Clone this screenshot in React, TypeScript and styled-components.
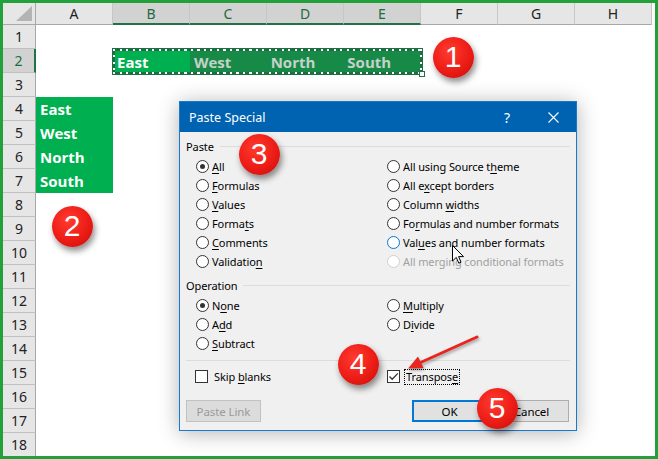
import React from "react";
import styled, { createGlobalStyle } from "styled-components";

const GlobalStyle = createGlobalStyle`
  html, body { margin: 0; padding: 0; background: #fff; }
  * { box-sizing: border-box; }
`;

const Frame = styled.div`
  position: relative;
  width: 658px;
  height: 459px;
  border: 3px solid #22a03a;
  overflow: hidden;
  background: #fff;
`;

const Sheet = styled.div`
  display: grid;
  grid-template-columns: 33px repeat(8, 77px);
  grid-template-rows: 22px repeat(18, 24px);
`;

const Corner = styled.div`
  grid-row: 1;
  grid-column: 1;
  display: flex;
  align-items: flex-end;
  justify-content: flex-end;
  padding: 0 3px 3px 0;
  background: #e6e6e6;
  border-right: 1px solid #a8a8a8;
  border-bottom: 1px solid #a8a8a8;

  &::after {
    content: "";
    width: 16px;
    height: 15px;
    background: #b4b4b4;
    clip-path: polygon(100% 0, 100% 100%, 0 100%);
  }
`;

const ColHead = styled.div<{ $col: number; $selected?: boolean }>`
  grid-row: 1;
  grid-column: ${(p) => p.$col + 1};
  display: flex;
  align-items: center;
  justify-content: center;
  background: ${(p) => (p.$selected ? "#d2d2d2" : "#e6e6e6")};
  color: ${(p) => (p.$selected ? "#1d6b40" : "#222")};
  border-right: 1px solid #c6c6c6;
  border-bottom: ${(p) => (p.$selected ? "2px solid #217346" : "1px solid #a8a8a8")};
  font: 14px "Noto Sans", sans-serif;
`;

const RowHead = styled.div<{ $row: number; $selected?: boolean }>`
  grid-row: ${(p) => p.$row + 1};
  grid-column: 1;
  display: flex;
  align-items: center;
  justify-content: center;
  background: ${(p) => (p.$selected ? "#d2d2d2" : "#e6e6e6")};
  color: ${(p) => (p.$selected ? "#1d6b40" : "#222")};
  border-bottom: 1px solid #c0c0c0;
  border-right: ${(p) => (p.$selected ? "2px solid #217346" : "1px solid #a8a8a8")};
  font: 14px "Noto Sans", sans-serif;
`;

const Cell = styled.div<{ $row: number; $col: number }>`
  grid-row: ${(p) => p.$row + 1};
  grid-column: ${(p) => p.$col + 1};
  display: flex;
  align-items: center;
  padding-left: 4px;
  background: #00b050;
  color: #fff;
  font: bold 15px "Open Sans", sans-serif;
`;

const RangeBox = styled.div`
  grid-row: 3;
  grid-column: 3 / span 4;
  position: relative;
  margin: -1px -2px -2px -1px;
  display: flex;
  border: 3px solid #1d6f42;
  background: #188a47;

  &::after {
    content: "";
    position: absolute;
    inset: -2px;
    pointer-events: none;
    background:
      repeating-linear-gradient(90deg, #fff 0 2px, transparent 2px 6.5px) top / 100% 2px no-repeat,
      repeating-linear-gradient(90deg, #fff 0 2px, transparent 2px 6.5px) bottom / 100% 2px no-repeat,
      repeating-linear-gradient(180deg, #fff 0 2px, transparent 2px 6.5px) left / 2px 100% no-repeat,
      repeating-linear-gradient(180deg, #fff 0 2px, transparent 2px 6.5px) right / 2px 100% no-repeat;
  }
`;

const FillHandle = styled.span`
  position: absolute;
  right: -5px;
  bottom: -5px;
  width: 6px;
  height: 6px;
  background: #fff;
  border: 1px solid #1d6f42;
  z-index: 1;
`;

const RangeCell = styled.div<{ $active?: boolean }>`
  flex: ${(p) => (p.$active ? "0 0 75px" : "1")};
  display: flex;
  align-items: center;
  padding-left: ${(p) => (p.$active ? "2px" : "4px")};
  background: ${(p) => (p.$active ? "#00b050" : "transparent")};
  color: ${(p) => (p.$active ? "#fff" : "#c5d2c9")};
  font: bold 15px "Open Sans", sans-serif;
`;

const Dialog = styled.div`
  position: absolute;
  left: 176px;
  top: 98px;
  width: 398px;
  height: 330px;
  display: flex;
  flex-direction: column;
  background: #f0f0f0;
  border: 1px solid #1979ca;
  box-shadow: 0 2px 20px rgba(0, 0, 0, 0.3);
  font-family: "Noto Sans", sans-serif;
  font-size: 11px;
  letter-spacing: -0.1px;
  color: #000;
`;

const TitleBar = styled.div`
  height: 30px;
  display: flex;
  align-items: center;
  background: #0063b1;
  color: #fff;
  font-size: 12.5px;
  letter-spacing: 0;
  padding-left: 9px;
`;

const Title = styled.span`
  flex: 1;
`;

const TitleButton = styled.span`
  width: 46px;
  height: 30px;
  display: flex;
  align-items: center;
  justify-content: center;
  font-size: 14px;
`;

const Body = styled.div`
  flex: 1;
  display: flex;
  flex-direction: column;
  padding: 0 6px 0 6px;
`;

const SectionHead = styled.div<{ $gap: number }>`
  margin-top: ${(p) => p.$gap}px;
  height: 16px;
  display: flex;
  align-items: center;
  gap: 6px;

  &::after {
    content: "";
    flex: 1;
    height: 1px;
    background: #dcdcdc;
  }
`;

const OptionGrid = styled.div<{ $rows: number }>`
  margin-top: 3px;
  padding-left: 10px;
  display: grid;
  grid-template-columns: 191px 1fr;
  grid-template-rows: repeat(${(p) => p.$rows}, 19px);
  grid-auto-flow: column;
`;

const Option = styled.label<{ $disabled?: boolean }>`
  display: flex;
  align-items: center;
  gap: 3px;
  color: ${(p) => (p.$disabled ? "#a0a0a0" : "#000")};
  white-space: nowrap;
`;

const RadioDot = styled.span<{ $checked?: boolean; $hover?: boolean; $disabled?: boolean }>`
  width: 13px;
  height: 13px;
  border-radius: 50%;
  display: flex;
  align-items: center;
  justify-content: center;
  background: #fff;
  border: 1px solid
    ${(p) => (p.$disabled ? "#cfcfcf" : p.$hover ? "#0078d7" : "#333")};

  &::after {
    content: "";
    width: 5px;
    height: 5px;
    border-radius: 50%;
    background: ${(p) => (p.$checked ? "#333" : "transparent")};
  }
`;

const Key = styled.span`
  text-decoration: underline;
  text-underline-offset: 2px;
`;

const Separator = styled.div`
  margin-top: 7px;
  height: 1px;
  background: #dcdcdc;
`;

const CheckGrid = styled.div`
  margin-top: 6px;
  padding-left: 9px;
  height: 19px;
  display: grid;
  grid-template-columns: 192px 1fr;
`;

const CheckOption = styled.label`
  display: flex;
  align-items: center;
  gap: 2px;
`;

const Box = styled.span`
  width: 13px;
  height: 13px;
  margin-right: 2px;
  background: #fff;
  border: 1px solid #333;
  display: flex;
`;

const Focus = styled.span<{ $focused?: boolean }>`
  padding: 0 1px;
  line-height: 14px;
  border: 1px dotted ${(p) => (p.$focused ? "#000" : "transparent")};
`;

const ButtonRow = styled.div`
  margin-top: 14px;
  padding-right: 1px;
  display: flex;
  gap: 7px;
`;

const Button = styled.div<{ $primary?: boolean; $disabled?: boolean; $push?: boolean }>`
  width: 75px;
  height: 22px;
  display: flex;
  align-items: center;
  justify-content: center;
  margin-left: ${(p) => (p.$push ? "auto" : "0")};
  font-size: 11.5px;
  background: ${(p) => (p.$disabled ? "#dcdcdc" : "#e1e1e1")};
  border: ${(p) =>
    p.$primary ? "2px solid #0078d7" : p.$disabled ? "1px solid #c2c2c2" : "1px solid #adadad"};
  color: ${(p) => (p.$disabled ? "#9a9a9a" : "#000")};
`;

const Badge = styled.div<{ $x: number; $y: number }>`
  position: absolute;
  left: ${(p) => p.$x - 23.5}px;
  top: ${(p) => p.$y - 23.5}px;
  width: 41px;
  height: 41px;
  border-radius: 50%;
  display: flex;
  align-items: center;
  justify-content: center;
  background: radial-gradient(circle at 40% 35%, #ff3b2f 0%, #ec1c16 55%, #c40d0a 100%);
  box-shadow: 2px 4px 6px rgba(0, 0, 0, 0.45);
  color: #fff;
  font: 30px "Liberation Sans", Arial, sans-serif;
`;

const Overlay = styled.svg<{ $x: number; $y: number }>`
  position: absolute;
  left: ${(p) => p.$x - 3}px;
  top: ${(p) => p.$y - 3}px;
  overflow: visible;
`;

const cols = ["A", "B", "C", "D", "E", "F", "G", "H"];
const rows = Array.from({ length: 18 }, (_, i) => i + 1);
const regions = ["East", "West", "North", "South"];

type Opt = { label?: React.ReactNode; checked?: boolean; hover?: boolean; disabled?: boolean };

const pasteOptions: Opt[] = [
  { label: <><Key>A</Key>ll</>, checked: true },
  { label: <><Key>F</Key>ormulas</> },
  { label: <><Key>V</Key>alues</> },
  { label: <>Forma<Key>t</Key>s</> },
  { label: <><Key>C</Key>omments</> },
  { label: <>Validatio<Key>n</Key></> },
  { label: <>All using Source t<Key>h</Key>eme</> },
  { label: <>All e<Key>x</Key>cept borders</> },
  { label: <>Column <Key>w</Key>idths</> },
  { label: <>Fo<Key>r</Key>mulas and number formats</> },
  { label: <>Val<Key>u</Key>es and number formats</>, hover: true },
  { label: <>All merging conditional formats</>, disabled: true },
];

const operationOptions: Opt[] = [
  { label: <>N<Key>o</Key>ne</>, checked: true },
  { label: <>A<Key>d</Key>d</> },
  { label: <><Key>S</Key>ubtract</> },
  { label: <><Key>M</Key>ultiply</> },
  { label: <>D<Key>i</Key>vide</> },
];

const Options = ({ items, rows }: { items: Opt[]; rows: number }) => (
  <OptionGrid $rows={rows}>
    {items.map((o, i) => (
      <Option key={i} $disabled={o.disabled}>
        <RadioDot $checked={o.checked} $hover={o.hover} $disabled={o.disabled} />
        <span>{o.label}</span>
      </Option>
    ))}
  </OptionGrid>
);

export default function App() {
  return (
    <>
      <GlobalStyle />
      <Frame>
        <Sheet>
          <Corner />
          {cols.map((c, i) => (
            <ColHead key={c} $col={i + 1} $selected={i >= 1 && i <= 4}>
              {c}
            </ColHead>
          ))}
          {rows.map((r) => (
            <RowHead key={r} $row={r} $selected={r === 2}>
              {r}
            </RowHead>
          ))}
          <RangeBox>
            {regions.map((name, i) => (
              <RangeCell key={name} $active={i === 0}>
                {name}
              </RangeCell>
            ))}
            <FillHandle />
          </RangeBox>
          {regions.map((name, i) => (
            <Cell key={name} $row={4 + i} $col={1}>
              {name}
            </Cell>
          ))}
        </Sheet>

        <Dialog>
          <TitleBar>
            <Title>Paste Special</Title>
            <TitleButton>?</TitleButton>
            <TitleButton>
              <svg width="11" height="11" viewBox="0 0 11 11">
                <path d="M0.5 0.5 L10.5 10.5 M10.5 0.5 L0.5 10.5" stroke="#fff" strokeWidth="1.1" />
              </svg>
            </TitleButton>
          </TitleBar>
          <Body>
            <SectionHead $gap={6}>Paste</SectionHead>
            <Options items={pasteOptions} rows={6} />
            <SectionHead $gap={6}>Operation</SectionHead>
            <Options items={operationOptions} rows={3} />
            <Separator />
            <CheckGrid>
              <CheckOption>
                <Box />
                <Focus>
                  Skip <Key>b</Key>lanks
                </Focus>
              </CheckOption>
              <CheckOption>
                <Box>
                  <svg width="11" height="11" viewBox="0 0 11 11">
                    <path d="M1.5 5.5 L4.2 8.2 L9.8 2.4" fill="none" stroke="#333" strokeWidth="1.3" />
                  </svg>
                </Box>
                <Focus $focused>
                  Transpos<Key>e</Key>
                </Focus>
              </CheckOption>
            </CheckGrid>
            <ButtonRow>
              <Button $disabled>Paste Link</Button>
              <Button $primary $push>OK</Button>
              <Button>Cancel</Button>
            </ButtonRow>
          </Body>
        </Dialog>

        <Overlay $x={400} $y={330} width="90" height="50" viewBox="0 0 90 50">
          <g style={{ filter: "drop-shadow(1px 2px 1.5px rgba(0,0,0,0.35))" }}>
            <line x1="77" y1="7" x2="20.5" y2="32.5" stroke="#e8251f" strokeWidth="3" strokeLinecap="round" />
            <polygon points="8,38.5 23.5,38 18,26.5" fill="#e8251f" />
          </g>
        </Overlay>

        <Overlay $x={452} $y={245} width="13" height="20" viewBox="0 0 13 20">
          <path
            d="M0.5 0.5 L0.5 16 L4.3 12.4 L6.8 18.2 L9 17.2 L6.6 11.6 L11.5 11.6 Z"
            fill="#fff"
            stroke="#000"
            strokeWidth="1"
            strokeLinejoin="round"
          />
        </Overlay>

        <Badge $x={453} $y={57}>1</Badge>
        <Badge $x={72} $y={226}>2</Badge>
        <Badge $x={259} $y={154}>3</Badge>
        <Badge $x={358} $y={364}>4</Badge>
        <Badge $x={497} $y={408}>5</Badge>
      </Frame>
    </>
  );
}
